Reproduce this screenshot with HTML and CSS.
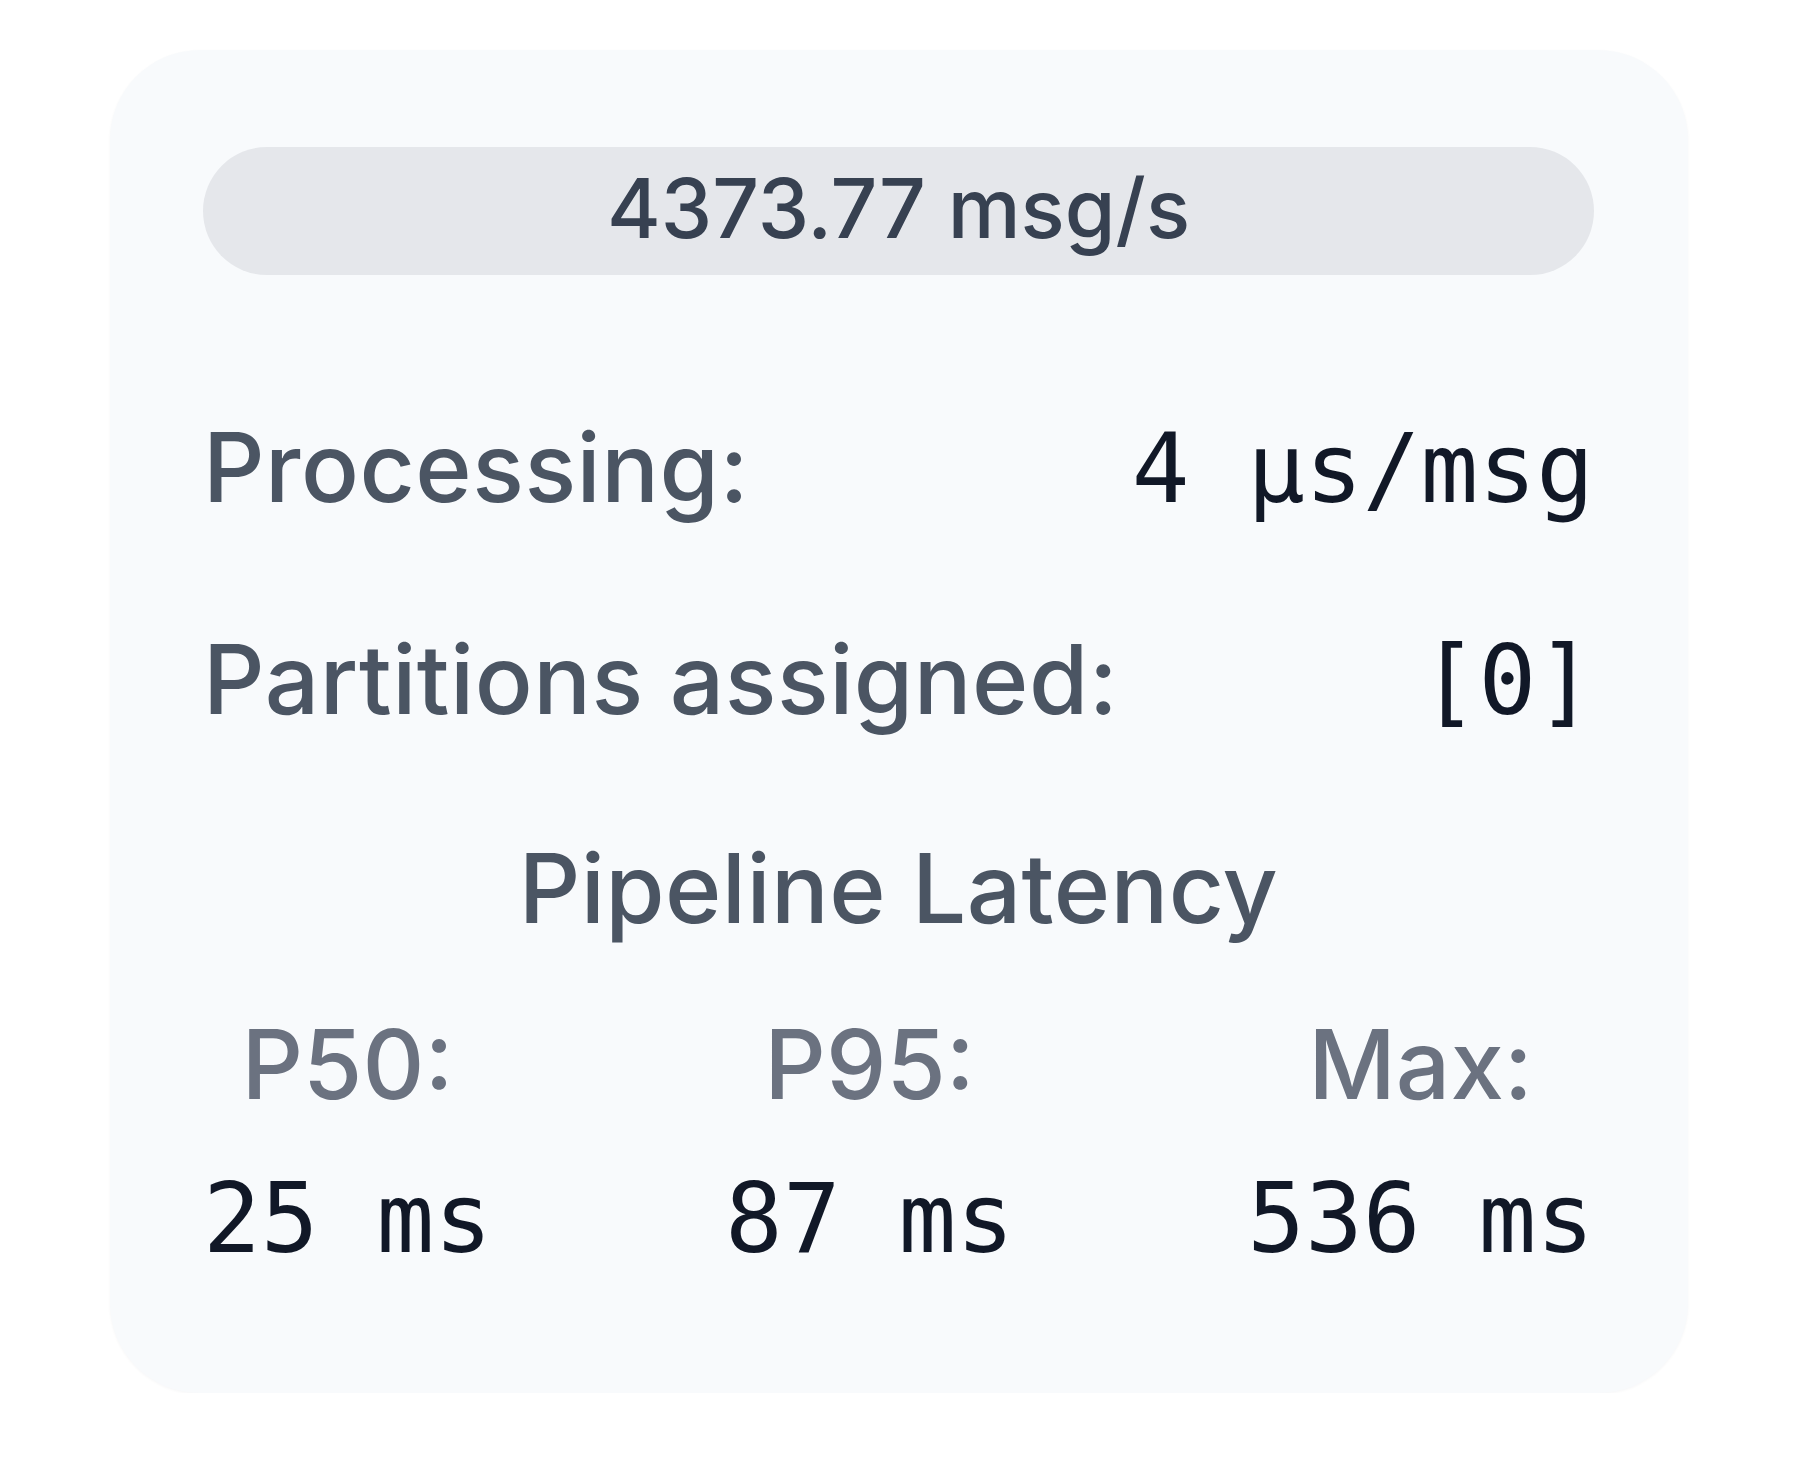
FILE: index.html
```html
<!DOCTYPE html>
<html lang="en">
<head>
<meta charset="utf-8">
<title>Consumer stats</title>
<link rel="stylesheet" href="styles.css">
</head>
<body>
<div class="page">
  <div class="card">
    <div class="rate-pill">4373.77 msg/s</div>
    <div class="stat-row first">
      <span class="stat-label">Processing:</span>
      <span class="stat-value">4 μs/msg</span>
    </div>
    <div class="stat-row">
      <span class="stat-label">Partitions assigned:</span>
      <span class="stat-value">[0]</span>
    </div>
    <div class="section-title">Pipeline Latency</div>
    <div class="latency-grid">
      <div class="latency-col">
        <span class="latency-label">P50:</span>
        <span class="latency-value">25 ms</span>
      </div>
      <div class="latency-col">
        <span class="latency-label">P95:</span>
        <span class="latency-value">87 ms</span>
      </div>
      <div class="latency-col">
        <span class="latency-label">Max:</span>
        <span class="latency-value">536 ms</span>
      </div>
    </div>
  </div>
</div>
</body>
</html>
```

FILE: styles.css
```css
html, body {
  margin: 0;
  padding: 0;
  background: #ffffff;
}

body {
  font-family: "Inter", "Liberation Sans", sans-serif;
}

.page {
  padding: 50px 0 0 110px;
}

.card {
  box-sizing: border-box;
  width: 1578px;
  height: 1343px;
  background: #f8fafc;
  border-radius: 90px;
  box-shadow: 0 1px 3px rgba(15, 23, 42, 0.04);
  padding: 97px 94px 0 93px;
  display: flex;
  flex-direction: column;
}

.rate-pill {
  height: 128px;
  border-radius: 64px;
  background: #e5e7eb;
  color: #374151;
  font-size: 82px;
  font-weight: 500;
  line-height: 124px;
  text-align: center;
  margin-bottom: 120px;
}

.stat-row {
  display: flex;
  justify-content: space-between;
  align-items: baseline;
  line-height: 144px;
  margin-top: 66px;
}

.stat-row.first {
  margin-top: 0;
}

.stat-label {
  font-size: 96px;
  font-weight: 500;
  letter-spacing: 0.5px;
  color: #4b5563;
}

.stat-value {
  font-family: "DejaVu Sans Mono", "Liberation Mono", monospace;
  font-size: 96px;
  color: #111827;
}

.section-title {
  margin-top: 63px;
  font-size: 96px;
  font-weight: 500;
  letter-spacing: 0.4px;
  line-height: 144px;
  color: #4b5563;
  text-align: center;
}

.latency-grid {
  display: flex;
  justify-content: space-between;
  margin-top: 32px;
}

.latency-col {
  display: flex;
  flex-direction: column;
  align-items: center;
  gap: 11px;
}

.latency-label {
  font-size: 96px;
  font-weight: 500;
  line-height: 144px;
  color: #6b7280;
}

.latency-value {
  font-family: "DejaVu Sans Mono", "Liberation Mono", monospace;
  font-size: 96px;
  line-height: 144px;
  color: #111827;
}
```
